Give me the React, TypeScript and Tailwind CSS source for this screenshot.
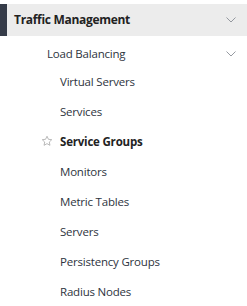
const items = [
  'Virtual Servers',
  'Services',
  'Service Groups',
  'Monitors',
  'Metric Tables',
  'Servers',
  'Persistency Groups',
  'Radius Nodes',
];

function Chevron() {
  return (
    <svg width="10" height="6" viewBox="0 0 10 6" className="shrink-0">
      <path d="M0.5 0.5 L5 5 L9.5 0.5" fill="none" stroke="#8a8e96" strokeWidth="0.9" />
    </svg>
  );
}

function Star() {
  return (
    <svg width="12" height="12" viewBox="0 0 24 24" className="shrink-0">
      <path
        d="M12 2.5l2.9 6.1 6.6.8-4.9 4.6 1.3 6.6L12 17.3l-5.9 3.3 1.3-6.6-4.9-4.6 6.6-.8z"
        fill="none"
        stroke="#a8a8a8"
        strokeWidth="1.6"
        strokeLinejoin="round"
      />
    </svg>
  );
}

export default function App() {
  return (
    <div className="w-[247px] h-[306px] bg-white pt-1 text-[#2e3440] font-['Open_Sans',sans-serif] text-[11.5px] tracking-[-0.2px]">
      <div className="flex items-center h-8 bg-[#ececec]">
        <div className="w-[7px] h-full bg-[#353b48]" />
        <span className="ml-[7px] flex-1 font-bold text-[12px] tracking-[-0.3px] text-[#222]">Traffic Management</span>
        <div className="mr-[11px]">
          <Chevron />
        </div>
      </div>
      <div className="flex items-center h-[31px] pt-[5px] pl-[47px]">
        <span className="flex-1">Load Balancing</span>
        <div className="mr-[11px]">
          <Chevron />
        </div>
      </div>
      {items.map((item) => (
        <div key={item} className="flex items-center h-[30px] pl-[60px] relative">
          {item === 'Service Groups' && (
            <span className="absolute left-[41px] top-[8px]">
              <Star />
            </span>
          )}
          <span className={item === 'Service Groups' ? 'font-bold text-[#222]' : ''}>{item}</span>
        </div>
      ))}
    </div>
  );
}
